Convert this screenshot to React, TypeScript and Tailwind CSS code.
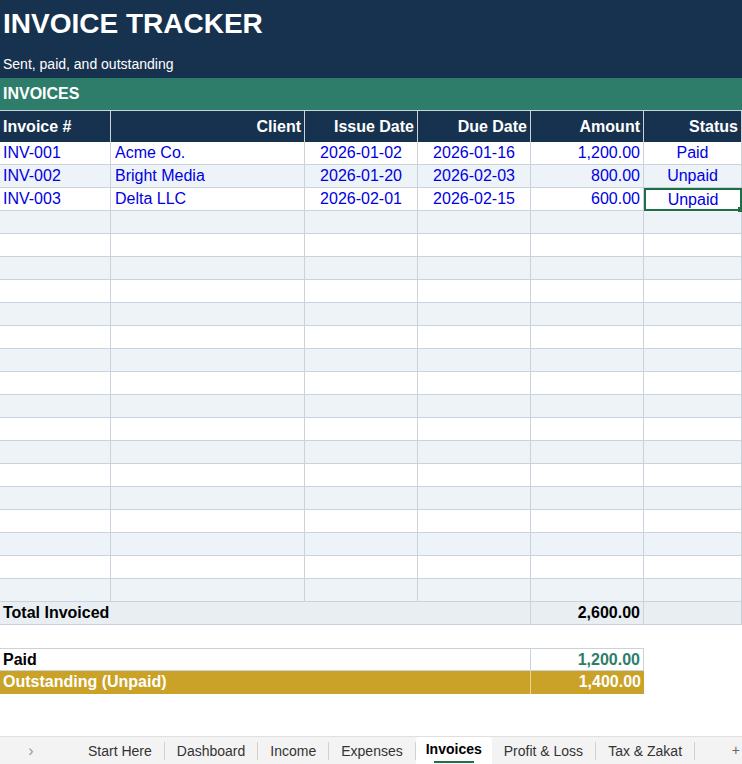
import React from "react";

const cols = "grid grid-cols-[111px_194px_113px_113px_113px_98px]";
const data = [
  ["INV-001", "Acme Co.", "2026-01-02", "2026-01-16", "1,200.00", "Paid"],
  ["INV-002", "Bright Media", "2026-01-20", "2026-02-03", "800.00", "Unpaid"],
  ["INV-003", "Delta LLC", "2026-02-01", "2026-02-15", "600.00", "Unpaid"],
];
const rows = Array.from({ length: 20 }, (_, i) => data[i] || ["", "", "", "", "", ""]);
const align = ["text-left pl-[3px]", "text-left pl-[4px]", "text-center", "text-center", "text-right pr-[3px]", "text-center"];

export default function App() {
  return (
    <div className="w-[742px] h-[764px] bg-white flex flex-col overflow-hidden text-[16px]" style={{ fontFamily: '"Liberation Sans", Arial, sans-serif' }}>
      <div className="bg-[#17324f] h-[78px] text-white pl-[3px]">
        <div className="text-[28px] font-bold pt-[6px] leading-[36px]">INVOICE TRACKER</div>
        <div className="text-[14px] mt-[13px] leading-[18px]">Sent, paid, and outstanding</div>
      </div>
      <div className="bg-[#2e7d6b] h-[33px] text-white font-bold flex items-center pl-[3px] border-b border-[#c8d3de]">INVOICES</div>
      <div className={`${cols} bg-[#17324f] text-white font-bold h-[31px]`}>
        {["Invoice #", "Client", "Issue Date", "Due Date", "Amount", "Status"].map((h, i) => (
          <div key={h} className={`flex items-center border-r border-[#c8d3de] ${i === 0 ? "pl-[3px]" : "justify-end pr-[3px]"}`}>{h}</div>
        ))}
      </div>
      {rows.map((r, ri) => (
        <div key={ri} className={`${cols} h-[23px] border-b border-[#c8d3de] ${ri % 2 ? "bg-[#eef3f8]" : "bg-white"}`}>
          {r.map((c, ci) =>
            ri === 2 && ci === 5 ? (
              <div key={ci} className="text-center text-[#0000e0] border-2 border-[#1e6f45] relative leading-[19px] -mb-[1px]">
                {c}
                <span className="absolute -right-[3px] -bottom-[3px] w-[5px] h-[5px] bg-[#1e6f45]" />
              </div>
            ) : (
              <div key={ci} className={`leading-[22px] text-[#0000e0] border-r border-[#c8d3de] ${align[ci]}`}>{c}</div>
            )
          )}
        </div>
      ))}
      <div className="grid grid-cols-[531px_113px_98px] h-[23px] bg-[#e9eef3] font-bold border-b border-[#c8d3de]">
        <div className="pl-[3px] leading-[22px] border-r border-[#c8d3de]">Total Invoiced</div>
        <div className="text-right pr-[3px] leading-[22px] border-r border-[#c8d3de]">2,600.00</div>
        <div className="border-r border-[#c8d3de]" />
      </div>
      <div className="h-[23px]" />
      <div className="grid grid-cols-[531px_113px] w-[644px] h-[23px] font-bold border-y border-[#c8d3de]">
        <div className="pl-[3px] leading-[21px] border-r border-[#c8d3de]">Paid</div>
        <div className="text-right pr-[3px] leading-[21px] text-[#2e7d6b] border-r border-[#c8d3de]">1,200.00</div>
      </div>
      <div className="grid grid-cols-[531px_113px] w-[644px] h-[23px] font-bold bg-[#c9a227] text-white">
        <div className="pl-[3px] leading-[22px] border-r border-[#e6d49a]">Outstanding (Unpaid)</div>
        <div className="text-right pr-[3px] leading-[22px]">1,400.00</div>
      </div>
      <div className="flex-1" />
      <div className="h-[28px] bg-[#f3f3f3] border-t border-[#e0e0e0] flex items-end text-[14px] text-[#333]">
        <div className="w-[60px] pl-[2px] h-full flex items-center justify-center text-[#999] text-[16px]">›</div>
        <div className="w-[16px]" />
        {["Start Here", "Dashboard", "Income", "Expenses", "Invoices", "Profit & Loss", "Tax & Zakat"].map((t) =>
          t === "Invoices" ? (
            <div key={t} className="h-[27px] bg-white px-[10px] flex flex-col items-center justify-center text-black rounded-t-[3px]">
              <span className="font-bold">{t}</span>
              <span className="w-[40px] h-[2px] bg-[#1e7145] mt-[1px]" />
            </div>
          ) : (
            <div key={t} className="h-[18px] mb-[4px] flex items-center px-[12px] border-r border-[#d0d0d0]">{t}</div>
          )
        )}
        <div className="flex-1" />
        <div className="h-full flex items-center pr-[2px] text-[#666]">+</div>
      </div>
    </div>
  );
}
